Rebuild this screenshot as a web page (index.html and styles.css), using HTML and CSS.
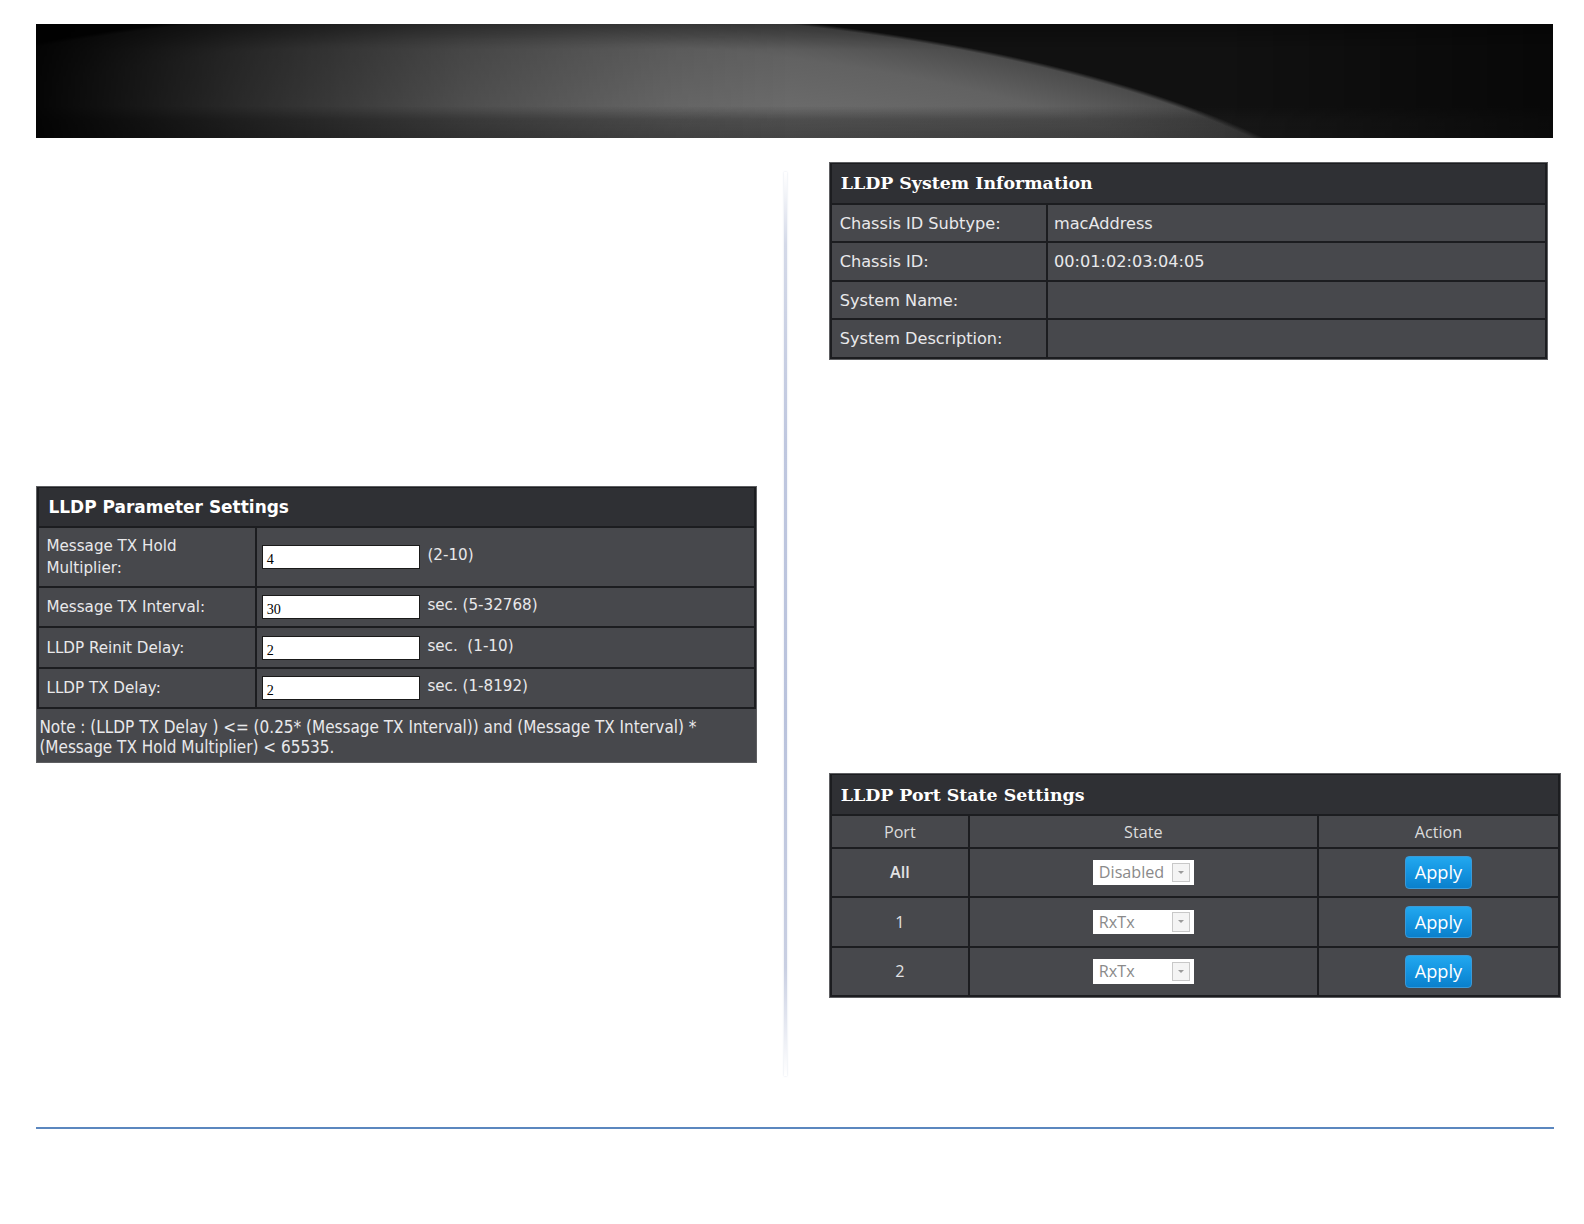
FILE: index.html
```html
<!DOCTYPE html>
<html>
<head>
<meta charset="utf-8">
<title>LLDP</title>
<link rel="stylesheet" href="styles.css">
</head>
<body>
<div class="page">
  <div class="banner"></div>
  <div class="content">
    <div class="col-left">
      <section class="panel param">
        <div class="panel-title sans">LLDP Parameter Settings</div>
        <div class="kv">
          <div class="cell label">Message TX Hold Multiplier:</div>
          <div class="cell value"><span class="input">4</span><span class="hint">(2-10)</span></div>
          <div class="cell label">Message TX Interval:</div>
          <div class="cell value"><span class="input">30</span><span class="hint">sec. (5-32768)</span></div>
          <div class="cell label">LLDP Reinit Delay:</div>
          <div class="cell value"><span class="input">2</span><span class="hint">sec.&nbsp; (1-10)</span></div>
          <div class="cell label">LLDP TX Delay:</div>
          <div class="cell value"><span class="input">2</span><span class="hint">sec. (1-8192)</span></div>
        </div>
        <div class="note">Note : (LLDP TX Delay ) &lt;= (0.25* (Message TX Interval)) and (Message TX Interval) * (Message TX Hold Multiplier) &lt; 65535.</div>
      </section>
    </div>
    <div class="divider-col"><div class="divider"></div></div>
    <div class="col-right">
      <section class="panel sysinfo">
        <div class="panel-title serif">LLDP System Information</div>
        <div class="kv">
          <div class="cell label">Chassis ID Subtype:</div>
          <div class="cell value">macAddress</div>
          <div class="cell label">Chassis ID:</div>
          <div class="cell value">00:01:02:03:04:05</div>
          <div class="cell label">System Name:</div>
          <div class="cell value"></div>
          <div class="cell label">System Description:</div>
          <div class="cell value"></div>
        </div>
      </section>
      <section class="panel ports">
        <div class="panel-title serif">LLDP Port State Settings</div>
        <div class="port-grid">
          <div class="pcell head">Port</div>
          <div class="pcell head">State</div>
          <div class="pcell head">Action</div>

          <div class="pcell row strong">All</div>
          <div class="pcell row"><div class="select"><span class="sel-text">Disabled</span><span class="sel-arrow"></span></div></div>
          <div class="pcell row"><button class="apply">Apply</button></div>

          <div class="pcell row">1</div>
          <div class="pcell row"><div class="select"><span class="sel-text">RxTx</span><span class="sel-arrow"></span></div></div>
          <div class="pcell row"><button class="apply">Apply</button></div>

          <div class="pcell row">2</div>
          <div class="pcell row"><div class="select"><span class="sel-text">RxTx</span><span class="sel-arrow"></span></div></div>
          <div class="pcell row"><button class="apply">Apply</button></div>
        </div>
      </section>
    </div>
  </div>
  <div class="footer-line"></div>
</div>
</body>
</html>
```

FILE: styles.css
```css
* { box-sizing: border-box; }

html, body {
  margin: 0;
  padding: 0;
  background: #ffffff;
  overflow: hidden;
}

.page {
  zoom: 1.0105;
  padding-top: 24px;
  padding-left: 36px;
  font-family: "DejaVu Sans", Verdana, sans-serif;
}

.banner {
  width: 1501px;
  height: 113px;
  background:
    linear-gradient(to right, rgba(0,0,0,0.95) 0%, rgba(0,0,0,0.6) 14%, rgba(0,0,0,0.3) 28%, rgba(0,0,0,0.08) 42%, rgba(0,0,0,0) 50%),
    linear-gradient(to bottom, rgba(0,0,0,0.3) 0%, rgba(0,0,0,0) 22%),
    linear-gradient(to right, rgba(0,0,0,0) 78%, rgba(0,0,0,0.55) 100%),
    linear-gradient(to bottom, rgba(30,30,30,0) 72%, rgba(30,30,30,0.4) 84%, rgba(30,30,30,0.52) 100%),
    radial-gradient(928px 300px at 450px 280px, #7a7a7a 0%, #727272 60%, #626262 88%, #4c4c4c 98.5%, #111111 99.6%),
    #0b0b0b;
}

.content {
  display: flex;
  align-items: flex-start;
}

.col-left {
  width: 713px;
  padding-top: 344px;
}

.divider-col {
  width: 71px;
  padding-left: 27px;
  padding-top: 33px;
}

.divider {
  width: 3px;
  height: 895px;
  background: linear-gradient(to bottom,
    rgba(205,210,228,0) 0%,
    #d4d9e8 8%,
    #bfc7df 30%,
    #b9c2dc 60%,
    #c9cfe2 88%,
    rgba(210,214,230,0) 100%);
  box-shadow: 0 0 2px rgba(190,198,222,0.6);
}

.col-right {
  width: 725px;
  padding-top: 23px;
}

/* Panels */
.panel {
  border: 1px solid #5e5f62;
  background: #1c1d20;
  padding: 1px 2px 2px 2px;
  display: flex;
  flex-direction: column;
  gap: 2px;
}

.panel-title {
  background: #2f3034;
  color: #ffffff;
  font-weight: bold;
  display: flex;
  align-items: center;
  padding-left: 9px;
}

.panel-title.sans {
  font-family: "DejaVu Sans", Verdana, sans-serif;
  font-size: 16.8px;
  height: 38px;
}

.panel-title.serif {
  font-family: "DejaVu Serif", Georgia, serif;
  font-size: 17.2px;
  height: 39px;
}

.kv {
  display: grid;
  gap: 2px;
}

.cell {
  background: #47484c;
  color: #e9e9eb;
  display: flex;
  align-items: center;
}

/* Parameter panel */
.param {
  width: 713px;
}

.param .kv {
  grid-template-columns: 213px 1fr;
  grid-template-rows: 57px 38px 38px 38px;
}

.param .label {
  font-size: 15px;
  line-height: 22px;
  padding-left: 7px;
  padding-right: 30px;
}

.param .value {
  padding-left: 5px;
}

.input {
  display: inline-block;
  width: 157px;
  height: 24px;
  background: #ffffff;
  border: 1px solid #1a1a1a;
  color: #000000;
  font-family: "Liberation Serif", "Times New Roman", serif;
  font-size: 14px;
  line-height: 24px;
  padding-left: 4px;
  padding-top: 1px;
}

.hint {
  font-size: 15px;
  color: #e9e9eb;
  margin-left: 7px;
  margin-top: -4px;
}

.note {
  background: #47484c;
  color: #e9e9eb;
  font-family: "DejaVu Sans Condensed", "DejaVu Sans", sans-serif;
  font-size: 16.8px;
  line-height: 19px;
  padding: 9px 10px 5px 2px;
  height: 52px;
  margin: 0 -2px -2px -2px;
}

/* System information */
.sysinfo {
  width: 712px;
}

.sysinfo .kv {
  grid-template-columns: 212px 1fr;
  grid-auto-rows: 36px;
}

.sysinfo .label {
  font-size: 16px;
  padding-left: 8px;
}

.sysinfo .value {
  font-size: 16px;
  padding-left: 6px;
}

/* Port state */
.ports {
  width: 725px;
  margin-top: 409px;
}

.port-grid {
  display: grid;
  grid-template-columns: 135px 343px 1fr;
  grid-template-rows: 30px 47px 47px 47px;
  gap: 2px;
}

.pcell {
  background: #47484c;
  color: #e2e2e4;
  font-family: "Open Sans", "DejaVu Sans", sans-serif;
  font-size: 16px;
  display: flex;
  align-items: center;
  justify-content: center;
}

.pcell.head {
  color: #dcdcdc;
}

.pcell.strong {
  font-weight: 600;
}

.select {
  width: 100px;
  height: 24px;
  background: #ffffff;
  display: flex;
  align-items: center;
  justify-content: space-between;
  padding: 0 4px 0 6px;
}

.sel-text {
  color: #8a8a8a;
  font-family: "Open Sans", sans-serif;
  font-size: 16px;
}

.sel-arrow {
  width: 18px;
  height: 19px;
  border: 1px solid #c8c8c8;
  background: #f4f4f4;
  position: relative;
}

.sel-arrow::after {
  content: "";
  position: absolute;
  left: 5px;
  top: 7px;
  border-left: 3px solid transparent;
  border-right: 3px solid transparent;
  border-top: 3px solid #9a9a9a;
}

.apply {
  width: 67px;
  height: 32px;
  border: 1px solid #3b9ad8;
  border-radius: 4px;
  background: linear-gradient(to bottom, #22a8ef 0%, #1494e0 50%, #0a80cc 100%);
  color: #ffffff;
  font-family: "Open Sans", sans-serif;
  font-size: 18px;
  padding: 0;
  line-height: 28px;
}

.footer-line {
  width: 1502px;
  height: 2px;
  background: #5b87bf;
  margin-top: 50px;
}
```
